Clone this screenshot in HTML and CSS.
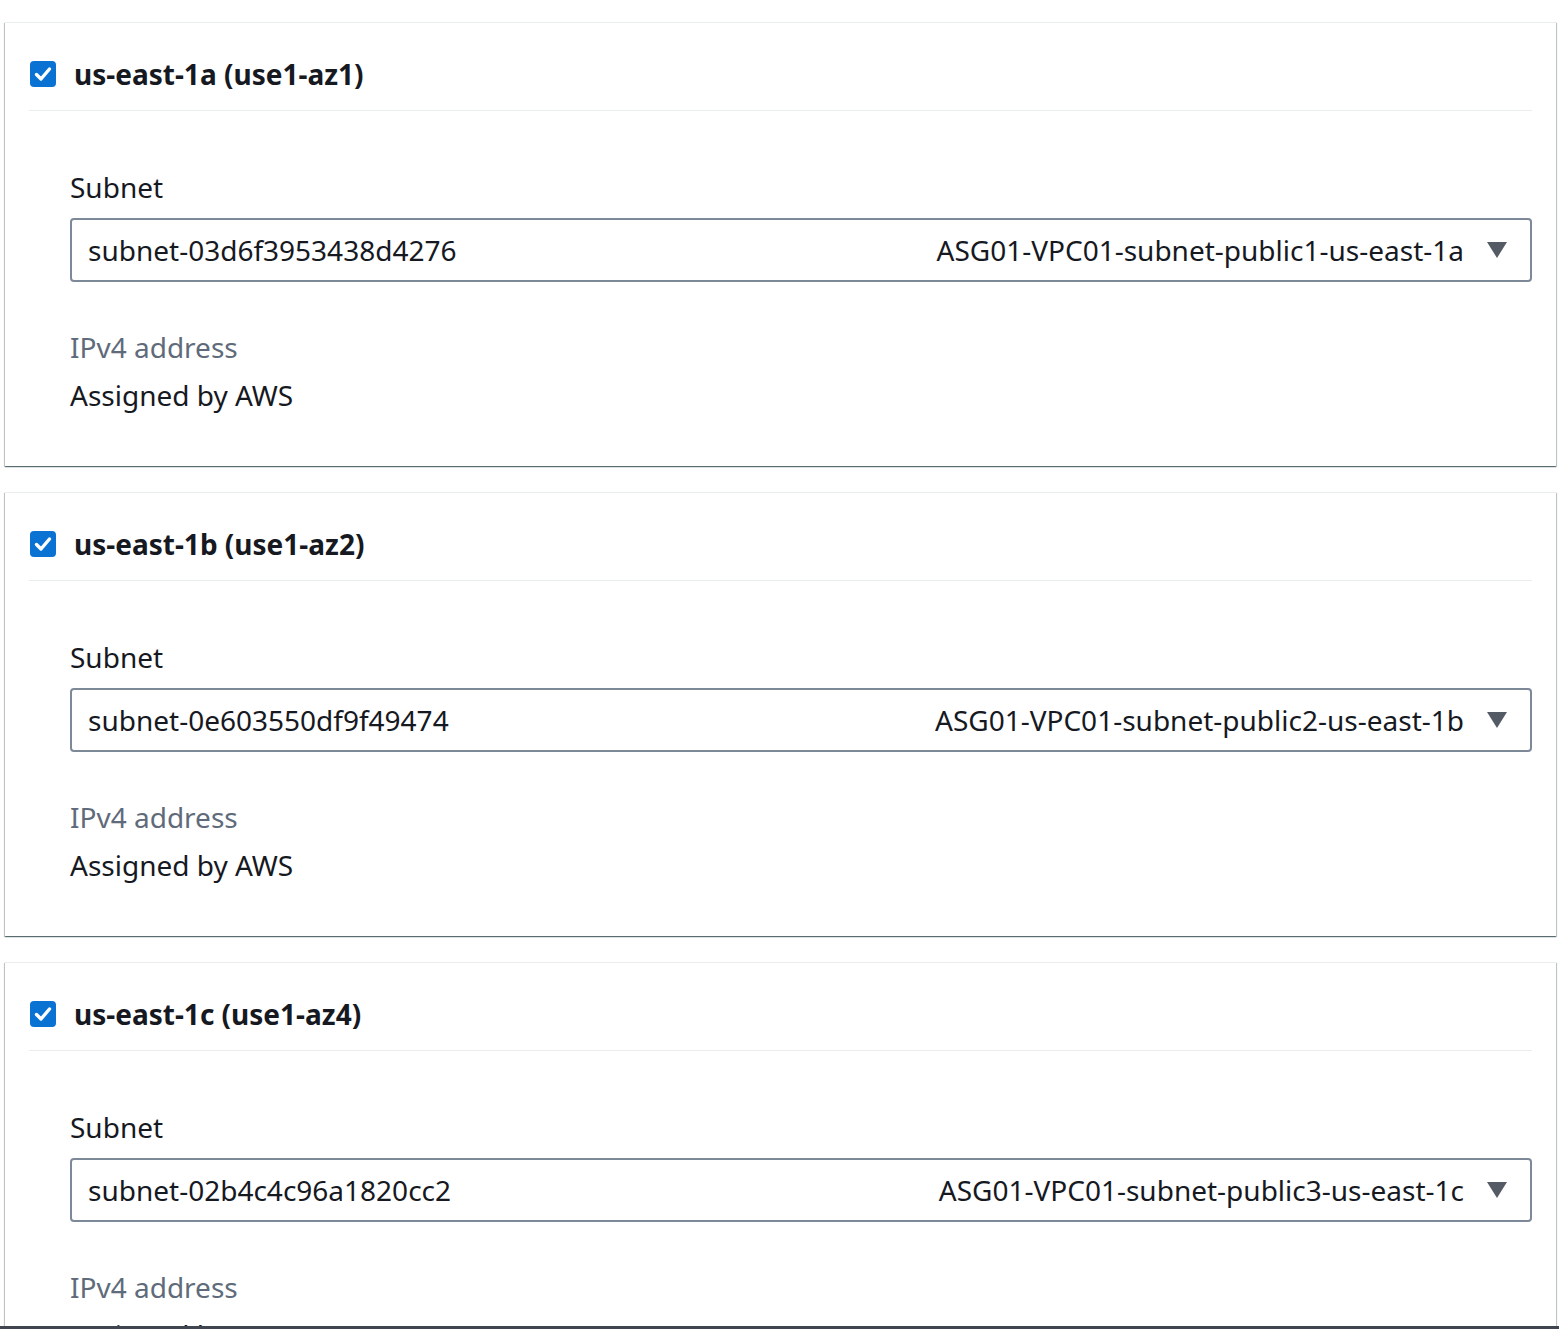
FILE: index.html
```html
<!DOCTYPE html>
<html lang="en">
<head>
<meta charset="utf-8">
<title>Subnets</title>
<link rel="stylesheet" href="styles.css">
</head>
<body>
<div class="list">
  <section class="card">
    <header class="card-head">
      <span class="checkbox"><svg viewBox="0 0 26 26" width="26" height="26"><polyline points="6.5,13.5 11,18 19.5,8" fill="none" stroke="#fff" stroke-width="3.4" stroke-linecap="round" stroke-linejoin="round"/></svg></span>
      <span class="az">us-east-1a (use1-az1)</span>
    </header>
    <div class="card-body">
      <div class="label">Subnet</div>
      <div class="select">
        <span class="sel-id">subnet-03d6f3953438d4276</span>
        <span class="sel-name">ASG01-VPC01-subnet-public1-us-east-1a</span>
        <svg class="caret" viewBox="0 0 20 16" width="20" height="16"><polygon points="0,0 20,0 10,16" fill="#545b64"/></svg>
      </div>
      <div class="sub-label">IPv4 address</div>
      <div class="value">Assigned by AWS</div>
    </div>
  </section>
  <section class="card">
    <header class="card-head">
      <span class="checkbox"><svg viewBox="0 0 26 26" width="26" height="26"><polyline points="6.5,13.5 11,18 19.5,8" fill="none" stroke="#fff" stroke-width="3.4" stroke-linecap="round" stroke-linejoin="round"/></svg></span>
      <span class="az">us-east-1b (use1-az2)</span>
    </header>
    <div class="card-body">
      <div class="label">Subnet</div>
      <div class="select">
        <span class="sel-id">subnet-0e603550df9f49474</span>
        <span class="sel-name">ASG01-VPC01-subnet-public2-us-east-1b</span>
        <svg class="caret" viewBox="0 0 20 16" width="20" height="16"><polygon points="0,0 20,0 10,16" fill="#545b64"/></svg>
      </div>
      <div class="sub-label">IPv4 address</div>
      <div class="value">Assigned by AWS</div>
    </div>
  </section>
  <section class="card">
    <header class="card-head">
      <span class="checkbox"><svg viewBox="0 0 26 26" width="26" height="26"><polyline points="6.5,13.5 11,18 19.5,8" fill="none" stroke="#fff" stroke-width="3.4" stroke-linecap="round" stroke-linejoin="round"/></svg></span>
      <span class="az">us-east-1c (use1-az4)</span>
    </header>
    <div class="card-body">
      <div class="label">Subnet</div>
      <div class="select">
        <span class="sel-id">subnet-02b4c4c96a1820cc2</span>
        <span class="sel-name">ASG01-VPC01-subnet-public3-us-east-1c</span>
        <svg class="caret" viewBox="0 0 20 16" width="20" height="16"><polygon points="0,0 20,0 10,16" fill="#545b64"/></svg>
      </div>
      <div class="sub-label">IPv4 address</div>
      <div class="value">Assigned by AWS</div>
    </div>
  </section>
</div>
<div class="footer-bar"></div>
</body>
</html>
```

FILE: styles.css
```css
html, body {
  margin: 0;
  padding: 0;
  background: #ffffff;
}
body {
  font-family: "Noto Sans", "Open Sans", sans-serif;
  font-size: 28px;
  line-height: 44px;
  color: #16191f;
}
.list {
  display: flex;
  flex-direction: column;
  gap: 26px;
  padding: 22px 3px 0 5px;
}
.card {
  background: #fff;
  border-top: 1px solid #eaeded;
  box-shadow: 0 1px 1px 0 rgba(0, 28, 36, 0.45),
              1px 1px 1px 0 rgba(0, 28, 36, 0.2),
              -1px 1px 1px 0 rgba(0, 28, 36, 0.2);
  padding: 0 24px 0 24px;
}
.card-head {
  display: flex;
  align-items: center;
  gap: 18px;
  padding: 29px 0 14px 1px;
  border-bottom: 1px solid #eaeded;
}
.checkbox {
  width: 26px;
  height: 26px;
  border-radius: 4px;
  background: #0972d3;
  display: flex;
  flex: none;
}
.az {
  font-weight: 700;
  color: #16191f;
}
.card-body {
  padding: 54px 0 49px 41px;
}
.label {
  color: #16191f;
  margin-bottom: 9px;
}
.select {
  display: flex;
  align-items: center;
  height: 60px;
  border: 2px solid #7d8998;
  border-radius: 4px;
  padding: 0 23px 0 16px;
  color: #16191f;
}
.sel-id {
  flex: 1;
}
.sel-name {
  margin-right: 23px;
}
.caret {
  flex: none;
}
.sub-label {
  color: #5f6b7a;
  margin-top: 43px;
  margin-bottom: 4px;
}
.value {
  color: #16191f;
}
.footer-bar {
  position: fixed;
  left: 0;
  right: 0;
  bottom: 0;
  height: 3px;
  background: #3f4650;
}
```
